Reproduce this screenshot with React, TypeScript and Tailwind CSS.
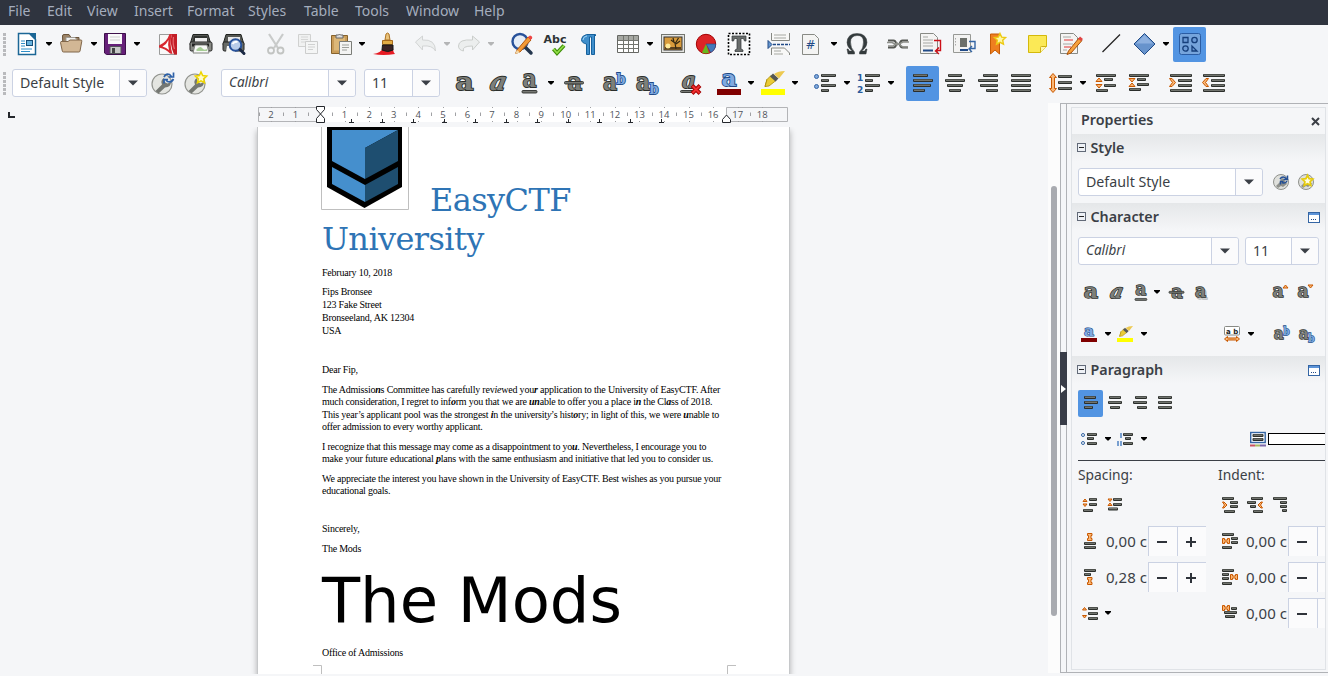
import React from "react";

type Kids = { children?: React.ReactNode };

function Slot({ w, children }: Kids & { w: string }) {
  return <div className={`flex shrink-0 items-center ${w}`}>{children}</div>;
}

function Ico({ s = 24, children }: Kids & { s?: number }) {
  return (
    <svg width={s} height={s} viewBox={`0 0 ${s} ${s}`} className="shrink-0 overflow-visible" fill="none">
      {children}
    </svg>
  );
}

function Arr({ dim = false }: { dim?: boolean }) {
  return (
    <svg width="6" height="4" viewBox="0 0 6 4" className="shrink-0">
      <path d="M0 0h6v1L3.6 3.6H2.4L0 1z" fill={dim ? "#b4b5b6" : "#000"} />
    </svg>
  );
}

function Bars({ b, h = 3 }: { b: number[][]; h?: number }) {
  return (
    <g>
      {b.map(([x, y, w], i) => (
        <g key={i}>
          <rect x={x} y={y} width={w} height={h} rx="1" fill="#2b2e2b" />
          <rect x={x + 1} y={y + 0.6} width={w - 2} height="1.2" fill="#83857f" />
        </g>
      ))}
    </g>
  );
}

function A({ x = 1, y = 19, size = 25, italic = false, blue = false, ch = "a", len, sw = 1.8 }: { x?: number; y?: number; size?: number; italic?: boolean; blue?: boolean; ch?: string; len?: number; sw?: number }) {
  return (
    <text
      x={x}
      y={y}
      fontFamily="DejaVu Serif"
      fontWeight="bold"
      fontSize={size}
      fontStyle={italic ? "italic" : "normal"}
      textLength={len}
      lengthAdjust="spacingAndGlyphs"
      fill={blue ? "#7fa9e0" : "#7d7f7a"}
      stroke={blue ? "#204a87" : "#2b2e2b"}
      strokeWidth={sw}
      style={{ paintOrder: "stroke" }}
    >
      {ch}
    </text>
  );
}

const Doc = () => <path d="M3.500 2.500h12l4 4v16h-16z" fill="#f4f4f3" stroke="#888a85" />;

const New = () => (
  <Ico>
    <path d="M3.500 1.500h11l6 6V22.500h-17z" fill="#fff" stroke="#1c6796" strokeWidth="1.500" />
    <path d="M14 1h7v7z" fill="#1c6796" />
    <path d="M6 9h4M6 11.500h4M6 14h4M6 17h11M6 19.500h9" stroke="#2f8fc9" strokeWidth="1.200" />
    <rect x="11.500" y="8.500" width="6" height="5" fill="#67b2dd" stroke="#174f78" />
  </Ico>
);
const Open = () => (
  <Ico>
    <path d="M3.500 4q0-1.500 1.500-1.500h5l2 3h8v12h-16z" fill="#9c8468" stroke="#6b543b" />
    <path d="M7 5.500h9l2 2v8H7z" fill="#f3f3f1" stroke="#a09c95" />
    <path d="M2 9.500h7l2-1.500h11q1 0 .8 1.200L21 19q-.2 1-1.200 1H4.500q-1 0-1.200-1L1.500 10.500z" fill="#d2b795" stroke="#80664a" />
  </Ico>
);
const Save = () => (
  <Ico>
    <path d="M1.500 1.500h21v21H3.500L1.500 21z" fill="#662079" stroke="#3e104b" />
    <path d="M5 2h14v10H5z" fill="#fafafa" />
    <path d="M7 5h10M7 8h10" stroke="#d0d0d0" />
    <path d="M7 14.500h11v7H7z" fill="#c7c8c7" stroke="#53525a" />
    <path d="M9 16h3v5H9z" fill="#434344" />
  </Ico>
);
const Pdf = () => (
  <Ico>
    <path d="M3.500 2.500h17v20h-17z" fill="#f8f8f8" stroke="#9b9c9b" />
    <path d="M13.500 2h2.500Q13 12 16.500 22L14 21.500Q10 17 3 15.500v-2Q11 10 13.500 2z" fill="#d82830" />
    <path d="M12.500 8q-2 4.500-6 6.500 4 1 6.500 3.500Q11.500 13 12.500 8z" fill="#fff" />
    <path d="M16 2h5v20.500h-3Q13 11 16 2z" fill="#c31d27" />
    <path d="M17.500 5q-1 7 1 12" stroke="#e8686f" strokeWidth="1.200" />
  </Ico>
);
const Print = () => (
  <Ico>
    <path d="M4 2.500h15l3 10H1z" fill="#555753" stroke="#202320" />
    <path d="M5 4h13l1 5H4z" fill="#303330" />
    <path d="M6 6h12v4H6z" fill="#eee" />
    <rect x="1" y="10" width="22" height="9" rx="1.500" fill="#888a85" stroke="#222" />
    <path d="M3 13h17" stroke="#222" strokeWidth="3" />
    <path d="M6 13h12l2 8H4z" fill="#f7f8f6" stroke="#81837e" />
    <path d="M7 18q4-5 6-2t5 1v2H8z" fill="#a6cd95" />
  </Ico>
);
const Preview = () => (
  <Ico>
    <path d="M4 2.500h15l3 10H1z" fill="#555753" stroke="#202320" />
    <path d="M6 5h12v5H6z" fill="#e8e8e8" />
    <rect x="1" y="10" width="21" height="9" rx="1.500" fill="#686b67" stroke="#222" />
    <path d="M5 14h8v6H4z" fill="#f7f8f6" />
    <circle cx="13.500" cy="13" r="5.800" fill="#b9cce9" stroke="#28529b" strokeWidth="2" />
    <path d="M10.500 12q2-3 5-2" stroke="#fff" strokeWidth="2" />
    <path d="M18 17.500l4 4" stroke="#1c2944" strokeWidth="3" strokeLinecap="round" />
  </Ico>
);
const Cut = () => (
  <Ico>
    <path d="M5 2l9 14M19 2l-9 14" stroke="#c9cbca" strokeWidth="2.200" />
    <circle cx="7" cy="18.500" r="3" stroke="#c2c4c2" strokeWidth="1.800" />
    <circle cx="16.500" cy="18.500" r="3" stroke="#c2c4c2" strokeWidth="1.800" />
  </Ico>
);
const Copy = () => (
  <Ico>
    <path d="M2.500 2.500h12v12h-12z" fill="#f0f1f1" stroke="#d0d1d0" />
    <path d="M5 5h7M5 7.500h7M5 10h5" stroke="#d5d6d6" />
    <path d="M9.500 9.500h12v12h-12z" fill="#f4f5f5" stroke="#cccdcd" />
    <path d="M12 12.500h7M12 15h7M12 17.500h5" stroke="#d0d1d1" />
  </Ico>
);
const Paste = () => (
  <Ico>
    <path d="M2.500 3.500h16v18h-16z" fill="#c99c58" stroke="#87622b" />
    <path d="M5 5.500h11v13H5z" fill="#dcb777" />
    <path d="M7 6V3h2.500q1-2 2-0H14v3z" fill="#ddd" stroke="#666" />
    <path d="M10.500 9.500h12v13h-12z" fill="#f4f4f3" stroke="#7b7d78" />
    <path d="M13 13h7M13 15.500h7M13 18h5" stroke="#9ea09b" />
  </Ico>
);
const Brush = () => (
  <Ico>
    <path d="M0 22q8-1 10-6h10q0 4 2 6-12 2-22 0z" fill="#e61a23" />
    <path d="M12 8l1-6q1.500-2 3 0l1 6z" fill="#eac37b" stroke="#ac7324" />
    <path d="M9.500 8.500h10v4h-10z" fill="#e3ad45" stroke="#a7691c" />
    <path d="M9.500 13h10.500v5q-5 3-11 0z" fill="#3a2325" stroke="#151919" />
  </Ico>
);
const Undo = () => (
  <Ico>
    <path d="M1.500 10l7-6v4q13-1 13 11-3-6-13-5v4z" fill="#eceeee" stroke="#d2d4d4" />
  </Ico>
);
const Redo = () => (
  <Ico>
    <path d="M22.500 10l-7-6v4q-14-1-14 6 0 4 5 5-2-5 9-5v4z" fill="#eceeee" stroke="#cbcecc" />
  </Ico>
);
const Find = () => (
  <Ico>
    <circle cx="10" cy="9.500" r="7.500" fill="#e5edf7" stroke="#27519a" strokeWidth="2.400" />
    <path d="M15 15l6 6" stroke="#24364e" strokeWidth="3.500" strokeLinecap="round" />
    <path d="M7 18L18 5l3 3L10 20l-4.500 1.500z" fill="#f39a37" stroke="#b45a10" />
    <path d="M18 5l2-1.500q3 1 2 3L20.500 8z" fill="#ee4545" />
    <path d="M7 18l3 2.500-5 1.500z" fill="#f0d8aa" />
  </Ico>
);
const Spell = () => (
  <Ico>
    <text x="0.500" y="10.500" fontFamily="DejaVu Sans" fontWeight="bold" fontSize="11" textLength="23" lengthAdjust="spacingAndGlyphs" fill="#2e3436">Abc</text>
    <path d="M10.500 17l3.500 4L21 13.500" stroke="#3f8f08" strokeWidth="4" />
    <path d="M10.500 17l3.500 4L21 13.500" stroke="#94e04a" strokeWidth="1.700" />
  </Ico>
);
const Pilcrow = () => (
  <Ico>
    <path d="M17.500 3v19.500h-3V5h-2v17.500h-3V12Q4.500 11 4.500 7.500T9.500 2.500h9V4z" fill="#3f8ecb" stroke="#16619d" />
    <path d="M10 4q-4 .5-4 4" stroke="#a0d4f5" />
  </Ico>
);
const TableI = () => (
  <Ico>
    <path d="M1.500 3.500h21v17h-21z" fill="#fff" stroke="#666864" />
    <path d="M2 4h20v4.500H2z" fill="#a6a8a3" />
    <path d="M2 8.500h20M2 12.500h20M2 16.500h20M7.500 4v16M12.500 4v16M17.500 4v16" stroke="#73756f" />
  </Ico>
);
const Picture = () => (
  <Ico>
    <rect x="0.500" y="2.500" width="23" height="18" fill="#e5e5e2" stroke="#73756f" />
    <rect x="3" y="5" width="18" height="13" fill="#d89b3c" stroke="#333" />
    <path d="M4 15h16v2.500H4z" fill="#59401e" />
    <circle cx="7" cy="14" r="2.500" fill="#ffea9a" />
    <path d="M15 17l-1-6-4-3M14.500 11l3-5M15 12l4-3M13 10l-1-4" stroke="#332812" strokeWidth="1.200" />
  </Ico>
);
const Chart = () => (
  <Ico>
    <circle cx="12" cy="12" r="9.700" fill="#dc2427" stroke="#a40000" />
    <path d="M12 12h9.700q0 6-5 8.500z" fill="#4479ba" stroke="#204a87" strokeWidth=".6" />
    <path d="M12 12l3 9q-4 1-7-.5z" fill="#67b81e" />
  </Ico>
);
const TextBox = () => (
  <Ico>
    <rect x="1.500" y="1.500" width="21" height="21" fill="#fafbfb" stroke="#000" strokeWidth="1.600" strokeDasharray="2 1.500" />
    <path d="M5 4h14v5h-1.500l-1-2.500H14V17l2 1v1.500H8V18l2-1V6.500H7.500L6.500 9H5z" fill="#6a6e6c" stroke="#2e3436" strokeWidth=".7" />
  </Ico>
);
const PageBreak = () => (
  <Ico>
    <path d="M4.500 1v7.500h18V1M4.500 23v-7h13l5 5v2" fill="#f8f8f7" stroke="#858782" />
    <path d="M7 3h12M7 6h12M7 19h7M7 22h9" stroke="#a5a7a2" />
    <path d="M1 8.500l4 4-4 4z" fill="#6698d1" stroke="#204a87" />
    <path d="M6 12.500h17" stroke="#204a87" strokeWidth="1.700" strokeDasharray="3 1" />
  </Ico>
);
const Field = () => (
  <Ico>
    <Doc />
    <text x="6.500" y="17" fontFamily="DejaVu Sans" fontSize="12" fill="#204a87">#</text>
  </Ico>
);
const Omega = () => (
  <Ico>
    <path d="M2 17l1 5h6.500v-2Q5.500 16 5.500 10T12 3.500 18.500 10 14.500 20v2H21l1-5h-1.200l-1 2h-3Q22 15 22 10.500 21.500 1.500 12 1.500T2 10.500Q2 15 7.200 19h-3l-1-2z" fill="#343b3d" stroke="#343b3d" strokeWidth=".5" />
  </Ico>
);
const Link = () => (
  <Ico>
    <path d="M2 8.500h5.500q2 0 3 3.500-1 3.500-3 3.500H2M22 8.500h-5.500q-2 0-3 3.500 1 3.500 3 3.500H22" stroke="#555753" strokeWidth="2" />
    <path d="M1 10.500h5l5 2.500 6-3h6M2 14h5l4-3 6 4h5" stroke="#8e908b" strokeWidth="1.500" />
  </Ico>
);
const Foot = () => (
  <Ico>
    <path d="M1.500 1.500h13l4 4v16h-17z" fill="#f4f4f3" stroke="#888a85" />
    <path d="M4 5h5M4 8h10M4 11h10M4 14h10" stroke="#a5a7a3" />
    <path d="M4 18.500h10" stroke="#204a87" strokeWidth="2" />
    <path d="M15 8.500h6.500v10h-4M20 15.500L16.500 19l3.500 3" stroke="#cc1018" strokeWidth="1.400" />
  </Ico>
);
const End = () => (
  <Ico>
    <path d="M1.500 2.500h17v18h-17z" fill="#f3f3f2" stroke="#979995" />
    <path d="M8 6h7v9H8z" fill="#6c6f6a" />
    <path d="M3.500 6v9" stroke="#aaa" strokeDasharray="1.500 1.500" />
    <path d="M8 18h8" stroke="#204a87" strokeWidth="2" />
    <path d="M17 9.500h6v7h-5M20 14l-3 3 3 3" stroke="#3465a4" strokeWidth="1.400" />
  </Ico>
);
const star = "M0-5.500l1.700 3.600 3.900.5-2.900 2.700.8 3.900L0 3.300l-3.500 1.900.8-3.900-2.900-2.700 3.900-.5z";
const Bookmark = () => (
  <Ico>
    <path d="M5.500 2h9v20L10 18l-4.500 4z" fill="#ee7f20" stroke="#c65b05" />
    <path d={star} transform="translate(15 7)" fill="#fff6a4" stroke="#ecca12" strokeWidth="1.400" />
  </Ico>
);
const Note = () => (
  <Ico>
    <path d="M2.500 3.500h18v11l-6 6h-12z" fill="#fbe956" stroke="#d4b90b" />
    <path d="M20.500 14.500h-5q-1 0-1 1v5" fill="#fff8b2" stroke="#ceb014" />
  </Ico>
);
const Track = () => (
  <Ico>
    <path d="M1.500 1.500h13l4 4v16h-17z" fill="#f4f4f3" stroke="#888a85" />
    <path d="M4 5h8M4 12h10M4 18h4" stroke="#a6a8a4" />
    <path d="M5 8h9M5 15h7" stroke="#e03535" />
    <path d="M9.500 19L20 6l3 2.500L12 21l-4 1.500z" fill="#f6a13c" stroke="#a9520b" />
    <path d="M19 7l2-2.500 3 2.500-2 2z" fill="#e14444" />
  </Ico>
);
const LineI = () => (
  <Ico>
    <path d="M3.500 20L21 2.500" stroke="#222" strokeWidth="1.300" />
  </Ico>
);
const Diamond = () => (
  <Ico>
    <path d="M12.500 1.500L23 12 12.500 22.500 2 12z" fill="#6793cc" stroke="#204a87" />
    <path d="M12.500 3L21 11.500H4z" fill="#8db0df" />
  </Ico>
);
const Shapes = () => (
  <Ico>
    <rect x="1.500" y="1.500" width="21" height="21" rx="2" fill="#76a4db" stroke="#2a5ca3" />
    <g fill="#6b9ad6" stroke="#163f7b" strokeWidth="1.300">
      <path d="M5 5.500h5v5H5z" />
      <circle cx="16.500" cy="8" r="2.700" />
      <circle cx="7.500" cy="16.500" r="2.700" />
      <path d="M14 14v5h5z" />
    </g>
  </Ico>
);

function Wrench({ isNew = false }: { isNew?: boolean }) {
  return (
    <Ico>
      <circle cx="11" cy="13" r="10" fill="#e4e5e1" stroke="#92948f" strokeWidth="1.200" />
      <path d="M4.500 20L11 13.500q-2-4 2-6.500l.5 4 3 1.500 3.500-1.500q0 5-6 5.500l-6.500 6z" fill="#747772" />
      {isNew ? (
        <path d={star} transform="translate(17 6.500)" fill="#fffbc8" stroke="#edd400" strokeWidth="1.600" />
      ) : (
        <path d="M13 6q2-4 5.500-2.500l2 2M22.500 1.500V6h-5M22.500 8q-2 4-6 2.500l-2-2M13 12.500V8.500h4" stroke="#2d60a8" strokeWidth="1.700" />
      )}
    </Ico>
  );
}

function SmallWrench({ isNew = false }: { isNew?: boolean }) {
  return (
    <Ico s={16}>
      <circle cx="8" cy="8" r="7.500" fill="#dfe0dc" stroke="#8f918c" />
      <path d="M3 12l4-4q0-3 3-4l4 6-4 3-2-1-3 2z" fill="#8e908b" />
      {isNew ? (
        <path d={star} transform="translate(9.500 6.500) scale(.95)" fill="#fffde0" stroke="#e6cb0c" strokeWidth="1.800" />
      ) : (
        <path d="M7 5q2-3 5-1.500l1.500 1.500M14.500 1.500V5.500h-4M14 7q-1.500 3-5 1.500M7.500 10.500v-3h3" stroke="#244f94" strokeWidth="1.500" />
      )}
    </Ico>
  );
}

const FontColor = ({ s = 24 }: { s?: number }) => (
  <svg width={s} height={s} viewBox="0 0 24 24" className="shrink-0 overflow-visible">
    <A x={4.5} y={14.5} size={23} len={15} blue />
    <rect x="0" y="18" width="24" height="6" fill="#800000" />
  </svg>
);
const Highlight = ({ s = 24 }: { s?: number }) => (
  <svg width={s} height={s} viewBox="0 0 24 24" className="shrink-0 overflow-visible">
    <path d="M4 15.500l2-7 3 4z" fill="#f4d940" stroke="#a98b08" />
    <path d="M6 8.500l4-4 5 5-7 5.500-4 .5z" fill="#eacb37" stroke="#a98b08" strokeWidth=".8" />
    <path d="M9 5.500l3-3 5.500 5-3 3z" fill="#555753" />
    <path d="M13 3q4-3 11-3l-6 7.500z" fill="#edc951" />
    <rect x="0" y="18" width="24" height="6" fill="#ff0" />
  </svg>
);
const Sup = ({ s = 24 }: { s?: number }) => (
  <svg width={s} height={s} viewBox="0 0 24 24" className="shrink-0 overflow-visible">
    <A x={1} y={18.5} size={24} len={14} />
    <A x={14.5} y={12.5} size={15} len={9} blue ch="b" />
  </svg>
);
const Sub = ({ s = 24 }: { s?: number }) => (
  <svg width={s} height={s} viewBox="0 0 24 24" className="shrink-0 overflow-visible">
    <A x={1} y={18.5} size={24} len={14} />
    <A x={14.5} y={22.5} size={15} len={9} blue ch="b" />
  </svg>
);
const Under = ({ s = 24 }: { s?: number }) => (
  <svg width={s} height={s} viewBox="0 0 24 24" className="shrink-0 overflow-visible">
    <A x={5.5} y={15.5} size={24} len={14} />
    <rect x="5" y="19.500" width="15" height="2.500" rx="1" fill="#777974" stroke="#2b2e2b" strokeWidth=".9" />
  </svg>
);
const Strike = ({ s = 24 }: { s?: number }) => (
  <svg width={s} height={s} viewBox="0 0 24 24" className="shrink-0 overflow-visible">
    <A x={5.5} y={18.5} size={24} len={14.5} />
    <rect x="2.500" y="10.500" width="19" height="2.500" rx="1" fill="#777974" stroke="#2b2e2b" strokeWidth=".9" />
  </svg>
);
const Bold = ({ s = 24 }: { s?: number }) => (
  <svg width={s} height={s} viewBox="0 0 24 24" className="shrink-0 overflow-visible">
    <A x={3.5} y={18.5} size={25} len={18} />
  </svg>
);
const Italic = ({ s = 24 }: { s?: number }) => (
  <svg width={s} height={s} viewBox="0 0 24 24" className="shrink-0 overflow-visible">
    <g transform="translate(5 0) skewX(-12)">
      <A x={3} y={18.5} size={25} len={16} italic />
    </g>
  </svg>
);
const Clear = () => (
  <Ico>
    <A x={3} y={16.5} size={23} len={14} italic />
    <rect x="1.500" y="19.500" width="13" height="2" rx="1" fill="#777974" stroke="#2b2e2b" strokeWidth=".9" />
    <path d="M13 14.500l8 8M21 14.500l-8 8" stroke="#a40000" strokeWidth="4" />
    <path d="M13.500 15l7 7M20.500 15l-7 7" stroke="#f03030" strokeWidth="2" />
  </Ico>
);

function Combo({ w, label, italic = false }: { w: string; label: string; italic?: boolean }) {
  return (
    <div className={`flex h-7 shrink-0 rounded-[3px] border border-[#cbd2e3] bg-white ${w}`}>
      <div className={`flex-1 pl-[7px] leading-[25px] whitespace-nowrap ${italic ? "text-[13.500px] italic" : "text-[14.200px]"}`}>{label}</div>
      <div className="flex w-[27px] items-center justify-center rounded-r-[3px] border-l border-[#cbd2e3] bg-[#fbfbfc]">
        <svg width="10" height="6" viewBox="0 0 10 6">
          <path d="M0 .5h10L5 5.500z" fill="#3b3f46" />
        </svg>
      </div>
    </div>
  );
}

const Grip = () => (
  <svg width="4" height="23" className="shrink-0">
    {[0, 4, 8, 12, 16, 20].map((y) => (
      <rect key={y} x="0" y={y} width="3" height="3" fill="#b9babd" />
    ))}
  </svg>
);

function Ruler() {
  const u = 24.57;
  const nums = [-2, -1, 1, 2, 3, 4, 5, 6, 7, 8, 9, 10, 11, 12, 13, 14, 15, 16, 17, 18];
  const halves = Array.from({ length: 21 }, (_, i) => i - 2.5).filter((n) => n !== 16.5);
  const tabs = Array.from({ length: 11 }, (_, i) => i);
  return (
    <svg width="534" height="22" viewBox="256 104 534 22" className="block" fill="none">
      <rect x="320" y="107" width="407" height="15" fill="#fff" />
      <path d="M320 107.500h-61.500v14H320M727 121.500h60.500v-14H726.500v14" stroke="#b3b4b7" />
      {halves.map((n) => (
        <path key={n} d={`M${Math.round(320 + n * u)}.5 112.500v3.500`} stroke="#a0a1a4" />
      ))}
      {nums.map((n) => (
        <g key={n}>
          <text x={320 + n * u} y="118" textAnchor="middle" fontFamily="Open Sans" fontSize="9.500" fill="#4f535a">
            {Math.abs(n)}
          </text>
          <path d={`M${Math.round(320 + n * u)}.5 107v1M${Math.round(320 + n * u)}.5 121v1`} stroke="#a0a1a4" />
        </g>
      ))}
      {tabs.map((i) => (
        <path key={i} d={`M${Math.round(351 + i * 30.95)}.5 119v3M${Math.round(351 + i * 30.95) - 2} 122.500h5`} stroke="#24272c" />
      ))}
      <path d="M316.500 106.500h8v3l-4 4.500 4 4.500v4h-8v-4l4-4.500-4-4.500z" fill="#fff" stroke="#24272c" />
      <path d="M722.500 122.500v-3l4-4.500 4 4.500v3z" fill="#fff" stroke="#24272c" />
    </svg>
  );
}

function L({ w, children }: Kids & { w: string }) {
  return <div className={`h-[12.300px] leading-[12.300px] whitespace-nowrap text-justify [text-align-last:justify] ${w}`}>{children}</div>;
}
const B = ({ children }: Kids) => <b className="font-bold italic">{children}</b>;

function Head({ label, dlg = false }: { label: string; dlg?: boolean }) {
  return (
    <div className="flex h-[27px] items-center bg-linear-to-b from-[#e5e7e9] to-[#f5f6f8] pl-[5px]">
      <svg width="9" height="9" fill="none">
        <rect x=".5" y=".5" width="8" height="8" fill="#eef1f6" stroke="#626a78" />
        <path d="M2 4.500h5" stroke="#222" />
      </svg>
      <span className="ml-[4.500px] flex-1 text-[14.300px] font-semibold text-[#3b3f46]">{label}</span>
      {dlg && (
        <svg width="12" height="11" className="mt-[2px] mr-[5px]" fill="none">
          <rect x=".5" y=".5" width="11" height="10" fill="#fff" stroke="#3465a4" />
          <path d="M1 2h10" stroke="#5d94d8" strokeWidth="2" />
          <path d="M3 7.500h6" stroke="#204a87" strokeDasharray="1 1" />
        </svg>
      )}
    </div>
  );
}

const or = { fill: "#fab877", stroke: "#c95800" };

function Spin({ w, partial = false }: { w: string; partial?: boolean }) {
  return (
    <div className={`flex h-[30px] shrink-0 ${w}`}>
      <div className="flex w-[29px] shrink-0 items-center justify-center border-t border-l border-[#cbd2e3] bg-[#fbfbfc] pr-[2px]">
        <div className="h-[2px] w-[10px] bg-[#2f333a]" />
      </div>
      <div className="flex flex-1 items-center justify-center border-t border-l border-[#cbd2e3] bg-[#fbfbfc] pr-[2px]">
        {!partial && (
          <svg width="10" height="10">
            <path d="M0 5h10M5 0v10" stroke="#2f333a" strokeWidth="2" />
          </svg>
        )}
      </div>
    </div>
  );
}

const Amount = ({ v }: { v: string }) => <span className="w-[42px] overflow-hidden text-[15px] leading-[20px] whitespace-nowrap">{v}</span>;

const hI = (x: number, y: number) => <path d={`M${x} ${y}v5h2v-1.500h3V${y + 5}h2V${y}h-2v1.500h-3V${y}z`} {...or} />;
const vI = (x: number, y: number) => <path d={`M${x} ${y}h4.500v2h-1v3h1v2H${x}v-2h1v-3h-1z`} {...or} />;

export default function App() {
  return (
    <div className="flex h-[676px] w-[1328px] flex-col overflow-hidden bg-[#f5f6f8] font-['Noto_Sans',sans-serif] text-[#3b3f46]">
      <div className="flex h-[25px] shrink-0 bg-[#2f343f] pb-[4px] pl-2 text-[14px] leading-[21px] text-[#a4adbd]">
        <Slot w="w-[39px]">File</Slot>
        <Slot w="w-[40px]">Edit</Slot>
        <Slot w="w-[47px]">View</Slot>
        <Slot w="w-[53px]">Insert</Slot>
        <Slot w="w-[61px]">Format</Slot>
        <Slot w="w-[56px]">Styles</Slot>
        <Slot w="w-[51px]">Table</Slot>
        <Slot w="w-[51px]">Tools</Slot>
        <Slot w="w-[68px]">Window</Slot>
        <Slot w="w-[40px]">Help</Slot>
      </div>

      <div className="flex h-[39px] shrink-0 items-center pb-px pl-[3px]">
        <Slot w="w-[12px]"><Grip /></Slot>
        <Slot w="w-[31px]"><New /></Slot>
        <Slot w="w-[13px]"><Arr /></Slot>
        <Slot w="w-[32px]"><Open /></Slot>
        <Slot w="w-[12px]"><Arr /></Slot>
        <Slot w="w-[31px]"><Save /></Slot>
        <Slot w="w-[22px]"><Arr /></Slot>
        <Slot w="w-[33px]"><Pdf /></Slot>
        <Slot w="w-[33px]"><Print /></Slot>
        <Slot w="w-[42px]"><Preview /></Slot>
        <Slot w="w-[32px]"><Cut /></Slot>
        <Slot w="w-[33px]"><Copy /></Slot>
        <Slot w="w-[30px]"><Paste /></Slot>
        <Slot w="w-[14px]"><Arr /></Slot>
        <Slot w="w-[41px]"><Brush /></Slot>
        <Slot w="w-[30px]"><Undo /></Slot>
        <Slot w="w-[13px]"><Arr dim /></Slot>
        <Slot w="w-[31px]"><Redo /></Slot>
        <Slot w="w-[22px]"><Arr dim /></Slot>
        <Slot w="w-[33px]"><Find /></Slot>
        <Slot w="w-[34px]"><Spell /></Slot>
        <Slot w="w-[39px]"><Pilcrow /></Slot>
        <Slot w="w-[31px]"><TableI /></Slot>
        <Slot w="w-[14px]"><Arr /></Slot>
        <Slot w="w-[33px]"><Picture /></Slot>
        <Slot w="w-[33px]"><Chart /></Slot>
        <Slot w="w-[40px]"><TextBox /></Slot>
        <Slot w="w-[32px]"><PageBreak /></Slot>
        <Slot w="w-[32px]"><Field /></Slot>
        <Slot w="w-[14px]"><Arr /></Slot>
        <Slot w="w-[41px]"><Omega /></Slot>
        <Slot w="w-[33px]"><Link /></Slot>
        <Slot w="w-[33px]"><Foot /></Slot>
        <Slot w="w-[33px]"><End /></Slot>
        <Slot w="w-[41px]"><Bookmark /></Slot>
        <Slot w="w-[33px]"><Note /></Slot>
        <Slot w="w-[40px]"><Track /></Slot>
        <Slot w="w-[33px]"><LineI /></Slot>
        <Slot w="w-[31px]"><Diamond /></Slot>
        <Slot w="w-[10px]"><Arr /></Slot>
        <div className="flex h-[35px] w-[33px] shrink-0 items-center justify-center rounded-[2px] bg-[#5294e2]"><Shapes /></div>
      </div>

      <div className="flex h-[39px] shrink-0 items-center pb-px pl-[3px]">
        <Slot w="w-[9px]"><Grip /></Slot>
        <Slot w="w-[139px]"><Combo w="w-[135px]" label="Default Style" /></Slot>
        <Slot w="w-[33px]"><Wrench /></Slot>
        <Slot w="w-[37px]"><Wrench isNew /></Slot>
        <Slot w="w-[143px]"><Combo w="w-[135px]" label="Calibri" italic /></Slot>
        <Slot w="w-[88px]"><Combo w="w-[76px]" label="11" /></Slot>
        <Slot w="w-[33px]"><Bold /></Slot>
        <Slot w="w-[32px]"><Italic /></Slot>
        <Slot w="w-[31px]"><Under /></Slot>
        <Slot w="w-[14px]"><Arr /></Slot>
        <Slot w="w-[40px]"><Strike /></Slot>
        <Slot w="w-[33px]"><Sup /></Slot>
        <Slot w="w-[44px]"><Sub /></Slot>
        <Slot w="w-[38px]"><Clear /></Slot>
        <Slot w="w-[31px]"><FontColor /></Slot>
        <Slot w="w-[13px]"><Arr /></Slot>
        <Slot w="w-[31px]"><Highlight /></Slot>
        <Slot w="w-[21px]"><Arr /></Slot>
        <Slot w="w-[31px]">
          <Ico>
            <g fill="#7fa7dc" stroke="#3465a4"><circle cx="3.500" cy="5.500" r="2" /><circle cx="3.500" cy="15.500" r="2" /></g>
            <Bars b={[[8, 3, 15], [8, 8, 8], [8, 13, 15], [8, 18, 8]]} />
          </Ico>
        </Slot>
        <Slot w="w-[13px]"><Arr /></Slot>
        <Slot w="w-[31px]">
          <Ico>
            <text x="0" y="9.500" fontFamily="DejaVu Sans" fontWeight="bold" fontSize="9" fill="#2a5b9c">1</text>
            <text x="0" y="21.500" fontFamily="DejaVu Sans" fontWeight="bold" fontSize="9" fill="#2a5b9c">2</text>
            <Bars b={[[8, 3, 15], [8, 8, 8], [8, 13, 15], [8, 18, 8]]} />
          </Ico>
        </Slot>
        <Slot w="w-[18px]"><Arr /></Slot>
        <div className="flex h-[35px] w-[33px] shrink-0 items-center justify-center rounded-[2px] bg-[#5294e2]">
          <Ico><Bars b={[[2, 3, 15], [2, 8, 20], [2, 13, 18], [2, 18, 12]]} /></Ico>
        </div>
        <Slot w="w-[4px]" />
        <Slot w="w-[33px]"><Ico><Bars b={[[5, 3, 14], [2, 8, 20], [4, 13, 16], [6, 18, 12]]} /></Ico></Slot>
        <Slot w="w-[33px]"><Ico><Bars b={[[7, 3, 15], [2, 8, 20], [4, 13, 18], [10, 18, 12]]} /></Ico></Slot>
        <Slot w="w-[39px]"><Ico><Bars b={[[2, 3, 20], [2, 8, 20], [2, 13, 20], [2, 18, 20]]} /></Ico></Slot>
        <Slot w="w-[32px]">
          <Ico>
            <path d="M5 2.500l3.500 4H6.500v11h2L5 21.500l-3.500-4h2v-11h-2z" {...or} />
            <Bars b={[[10, 4, 14], [10, 10, 14], [10, 16, 14]]} />
          </Ico>
        </Slot>
        <Slot w="w-[14px]"><Arr /></Slot>
        <Slot w="w-[33px]">
          <Ico>
            <Bars b={[[2, 3, 20], [10, 7, 9], [10, 13, 12], [2, 18, 12]]} />
            <path d="M5 7l3 3.500H2zM5 17l3-3.500H2z" {...or} />
          </Ico>
        </Slot>
        <Slot w="w-[41px]">
          <Ico>
            <Bars b={[[2, 3, 20], [10, 7, 9], [10, 12, 12], [2, 17, 12]]} />
            <path d="M5 11l3-3.500H2zM5 12l3 3.500H2z" {...or} />
          </Ico>
        </Slot>
        <Slot w="w-[33px]">
          <Ico>
            <Bars b={[[2, 3, 22], [10, 8, 14], [10, 13, 14], [2, 18, 22]]} />
            <path d="M1.500 7.500h2.500l3.500 4-3.500 4H1.500l3-4z" {...or} />
          </Ico>
        </Slot>
        <Slot w="w-[24px]">
          <Ico>
            <Bars b={[[2, 3, 22], [10, 8, 14], [10, 13, 14], [2, 18, 22]]} />
            <path d="M7.500 7.500H5l-3.500 4 3.500 4h2.500l-3-4z" {...or} />
          </Ico>
        </Slot>
      </div>

      <div className="flex min-h-0 flex-1">
        <div className="flex h-[571px] w-[1048px] flex-col overflow-hidden">
          <div className="flex h-[24px] shrink-0 pt-px">
            <svg width="256" height="22"><path d="M9 8v5h6" stroke="#24272c" strokeWidth="2" fill="none" /></svg>
            <Ruler />
          </div>
          <div className="ml-[257px] h-[547px] w-[533px] shrink-0 border-x border-[#c6c8ca] bg-white pl-[63px] text-black shadow-[0_4px_6px_rgba(0,0,0,0.3)] [clip-path:inset(0_-8px_0_-8px)]">
            <div className="flex h-[83px] items-end">
              <svg width="89" height="83" viewBox="0 0 89 83" fill="none" className="shrink-0">
                <path d="M.5 0v82.500h87V0" stroke="#bfbfbf" />
                <path d="M6 0h75v60L43.500 81 6 60z" fill="#000" />
                <path d="M11 3h33v49L11 34z" fill="#458fcd" />
                <path d="M11 3h66L44 21H11z" fill="#458fcd" />
                <path d="M77 3v31L44 52V21z" fill="#1e4e70" />
                <path d="M11 40l33 18v17L11 57z" fill="#458fcd" />
                <path d="M77 40L44 58v17l33-18z" fill="#1e4e70" />
              </svg>
            </div>
            <div className="-mt-[30px] h-[39px] pl-[109px] font-['DejaVu_Serif',serif] text-[32px] leading-[40px] tracking-[-0.600px] text-[#2e74b5]">EasyCTF</div>
            <div className="h-[41px] pl-px font-['DejaVu_Serif',serif] text-[32px] leading-[40px] tracking-[-0.600px] text-[#2e74b5]">University</div>
            <div className="pl-px font-['Liberation_Serif',serif] text-[10px] tracking-[-0.220px]">
              <div className="h-[6.500px]" />
              <L w="w-[70px]">February 10, 2018</L>
              <div className="h-[7.500px]" />
              <div className="flex flex-col gap-[0.700px]">
                <L w="w-[49px]">Fips Bronsee</L>
                <L w="w-[59px]">123 Fake Street</L>
                <L w="w-[92px]">Bronseeland, AK 12304</L>
                <L w="w-[18px]">USA</L>
              </div>
              <div className="h-[26.500px]" />
              <L w="w-[35px]">Dear Fip,</L>
              <div className="h-[7.700px]" />
              <L w="w-[398px]">The Admissio<B>n</B>s Committ<i>e</i>e has carefully rev<i>ie</i>wed you<B>r</B> application to the University of EasyCTF. After</L>
              <L w="w-[390px]">much consideration, I regret to inf<B>o</B>rm you that we are <B>un</B>able to offer you a place i<B>n</B> the Cl<B>a</B>ss of 2018.</L>
              <L w="w-[397px]">This year’s applicant pool was the strongest <B>i</B>n the uni<i>v</i>ersit<i>y</i>’s hist<B>o</B>ry; in light of this, we were <B>u</B>nable to</L>
              <L w="w-[159px]">offer admission to every worthy applicant.</L>
              <div className="h-[7.700px]" />
              <L w="w-[384px]">I recognize that this message may come as a disappointment to yo<B>u</B>. Nevertheless, I encourage you to</L>
              <L w="w-[391px]">make your future educational <B>p</B>lans with the same enthusiasm and initiative that led you to consider us.</L>
              <div className="h-[7.700px]" />
              <L w="w-[399px]">We appreciate the interest you have shown in the University of EasyCTF. Best wishes as you pursue your</L>
              <L w="w-[67px]">educational goals.</L>
              <div className="h-[25.500px]" />
              <L w="w-[36px]">Sincerely,</L>
              <div className="h-[7.700px]" />
              <L w="w-[39px]">The Mods</L>
              <div className="h-[91px] font-['DejaVu_Sans',sans-serif] text-[62.400px] leading-[89px] tracking-normal whitespace-nowrap">The Mods</div>
              <L w="w-[81px]">Office of Admissions</L>
            </div>
            <svg width="440" height="15" className="-ml-[10px]" fill="none">
              <path d="M2 6.500h8.500V16M425 6.500h-8.500V16" stroke="#bfbfbf" />
            </svg>
          </div>
        </div>

        <div className="flex h-[570px] w-[12px] shrink-0 justify-center bg-[#fcfcfc] pt-[83px]">
          <div className="h-[430px] w-[6px] rounded-[3px] bg-[#a9abb0]" />
        </div>

        <div className="relative flex h-[570px] w-[268px] shrink-0 border-y border-l border-[#b0b2b6] bg-[#f5f6f8]">
          <div className="w-[5px] shrink-0" />
          <div className="absolute top-[248px] -left-px flex h-[73px] w-[7px] items-center bg-[#383c47]">
            <svg width="6" height="8"><path d="M1 0l5 4-5 4z" fill="#fff" /></svg>
          </div>
          <div className="flex-1 border-l border-[#b0b2b6] pt-[3px] pl-[4px]">
            <div className="flex h-[563px] w-[255px] flex-col overflow-hidden border border-[#e0e3e7]">
              <div className="flex h-[26px] shrink-0 items-center justify-between pr-[5px] pl-[9px]">
                <span className="pb-[2px] text-[14.300px] font-semibold">Properties</span>
                <svg width="9" height="9"><path d="M1 1l7 7M8 1l-7 7" stroke="#3b3f46" strokeWidth="2" /></svg>
              </div>
              <Head label="Style" />
              <div className="flex h-[42px] shrink-0 items-center pl-[6px]">
                <Slot w="w-[195px]"><Combo w="w-[185px]" label="Default Style" /></Slot>
                <Slot w="w-[25px]"><SmallWrench /></Slot>
                <Slot w="w-[17px]"><SmallWrench isNew /></Slot>
              </div>
              <Head label="Character" dlg />
              <div className="flex h-[42px] shrink-0 items-center gap-[6px] pl-[6px]">
                <Combo w="w-[161px]" label="Calibri" italic />
                <Combo w="w-[74px]" label="11" />
              </div>
              <div className="flex h-[40px] shrink-0 items-center pl-[9px]">
                <Slot w="w-[25px]"><Bold s={19} /></Slot>
                <Slot w="w-[25px]"><Italic s={19} /></Slot>
                <Slot w="w-[23px]"><Under s={19} /></Slot>
                <Slot w="w-[13px]"><Arr /></Slot>
                <Slot w="w-[27px]"><Strike s={19} /></Slot>
                <Slot w="w-[78px]"><Ico s={16}><g opacity=".3" transform="translate(1.500 1.500)"><A x={1} y={13} size={18} len={11} sw={1.4} /></g><A x={1} y={13} size={18} len={11} sw={1.4} /></Ico></Slot>
                <Slot w="w-[25px]"><Ico s={16}><A x={0.5} y={13} size={18} len={11} sw={1.4} /><path d="M13.500 1l2.500 3h-5z" {...or} /></Ico></Slot>
                <Slot w="w-[16px]"><Ico s={16}><A x={0.5} y={13} size={18} len={11} sw={1.4} /><path d="M13.500 4l2.500-3h-5z" {...or} /></Ico></Slot>
              </div>
              <div className="flex h-[44px] shrink-0 items-center pl-[9px]">
                <Slot w="w-[24px]"><FontColor s={16} /></Slot>
                <Slot w="w-[12px]"><Arr /></Slot>
                <Slot w="w-[24px]"><Highlight s={16} /></Slot>
                <Slot w="w-[83px]"><Arr /></Slot>
                <Slot w="w-[24px]">
                  <Ico s={16}>
                    <rect x=".5" y=".5" width="15" height="8.500" rx="1" fill="#fff" stroke="#888a85" />
                    <text x="2" y="7.500" fontFamily="DejaVu Sans" fontWeight="bold" fontSize="7" fill="#222">a b</text>
                    <path d="M.5 13l3-2.500v1.500h9v-1.500l3 2.500-3 2.500V14h-9v1.500z" {...or} />
                  </Ico>
                </Slot>
                <Slot w="w-[25px]"><Arr /></Slot>
                <Slot w="w-[25px]"><Sup s={17} /></Slot>
                <Slot w="w-[16px]"><Sub s={17} /></Slot>
              </div>
              <Head label="Paragraph" dlg />
              <div className="flex h-[40px] shrink-0 items-center pl-[6px]">
                <div className="flex h-[27px] w-[25px] items-center justify-center rounded-[2px] bg-[#5294e2]">
                  <Ico s={16}><Bars b={[[1, 1, 12], [1, 6, 14], [1, 11, 9]]} /></Ico>
                </div>
                <Slot w="w-[4px]" />
                <Slot w="w-[25px]"><Ico s={16}><Bars b={[[2, 1, 12], [1, 6, 14], [3, 11, 10]]} /></Ico></Slot>
                <Slot w="w-[25px]"><Ico s={16}><Bars b={[[3, 1, 12], [1, 6, 14], [5, 11, 10]]} /></Ico></Slot>
                <Slot w="w-[25px]"><Ico s={16}><Bars b={[[1, 1, 14], [1, 6, 14], [1, 11, 14]]} /></Ico></Slot>
              </div>
              <div className="flex h-[32px] shrink-0 items-center pl-[9px]">
                <Slot w="w-[24px]">
                  <Ico s={16}>
                    <g stroke="#3465a4"><circle cx="2" cy="4" r="1.500" /><circle cx="2" cy="12" r="1.500" /></g>
                    <Bars b={[[6, 2, 10], [6, 6, 7], [6, 11, 10]]} />
                  </Ico>
                </Slot>
                <Slot w="w-[12px]"><Arr /></Slot>
                <Slot w="w-[24px]">
                  <Ico s={16}>
                    <path d="M4 2v5M1 10v5M4 10v5" stroke="#5a8ac6" strokeWidth="1.600" />
                    <Bars b={[[6, 2, 10], [8, 6, 6], [6, 11, 10]]} />
                  </Ico>
                </Slot>
                <Slot w="w-[109px]"><Arr /></Slot>
                <Slot w="w-[18px]">
                  <Ico s={16}>
                    <rect x=".7" y="1.500" width="14.500" height="10" fill="#fff" stroke="#3465a4" strokeWidth="1.400" />
                    <Bars b={[[2.5, 3, 11], [2.5, 7, 11]]} />
                    <path d="M0 14.500h5" stroke="#cb5263" strokeWidth="2" />
                    <path d="M5 14.500h5" stroke="#a9ba61" strokeWidth="2" />
                    <path d="M10 14.500h6" stroke="#7d68a9" strokeWidth="2" />
                  </Ico>
                </Slot>
                <div className="h-[12px] flex-1 border border-r-0 border-black bg-white" />
              </div>
              <div className="mt-[5px] ml-[6px] h-px shrink-0 bg-[#3b3f46]" />
              <div className="flex h-[30px] shrink-0 items-center pb-[2px] pl-[6px] text-[13.800px]">
                <Slot w="w-[140px]">Spacing:</Slot>
                <Slot w="w-[80px]">Indent:</Slot>
              </div>
              <div className="flex h-[28px] shrink-0 items-center pl-[10px]">
                <Slot w="w-[25px]"><Ico s={16}><path d="M3 2l2 2.500H1zM3 9.500L5 7H1z" {...or} /><Bars b={[[7, 1, 8], [7, 6, 8], [1, 12, 10]]} /></Ico></Slot>
                <Slot w="w-[115px]"><Ico s={16}><path d="M3 4.500L5 2H1zM3 6l2 2.500H1z" {...or} /><Bars b={[[6, 1, 9], [6, 6, 9], [1, 10.5, 10]]} /></Ico></Slot>
                <Slot w="w-[25px]"><Ico s={16}><path d="M.5 5H2l3 3-3 3H.5l2-3z" {...or} /><Bars b={[[0, 0, 12], [8, 4, 8], [8, 8, 8], [2, 13, 11]]} /></Ico></Slot>
                <Slot w="w-[25px]"><Ico s={16}><path d="M15.500 5H14l-3 3 3 3h1.500l-2-3z" {...or} /><Bars b={[[4, 0, 12], [0, 4, 9], [3, 8, 6], [6, 13, 10]]} /></Ico></Slot>
                <Slot w="w-[16px]"><Ico s={16}><Bars b={[[1, 0, 14], [8, 4, 7], [8, 8, 7], [10, 12, 5]]} /></Ico></Slot>
              </div>
              <div className="mt-[7px] flex flex-col gap-[6px]">
                <div className="flex h-[30px] items-center pl-[10px]">
                  <Slot w="w-[24px]"><Ico s={16}>{vI(5.5, 0.5)}<Bars b={[[2, 9, 12], [2, 13, 12]]} /></Ico></Slot>
                  <Slot w="w-[42px]"><Amount v="0,00 c" /></Slot>
                  <Spin w="w-[58px]" />
                  <Slot w="w-[16px]" />
                  <Slot w="w-[24px]"><Ico s={16}>{hI(0.5, 5.5)}<Bars b={[[0, 0, 12], [9, 4, 7], [9, 8, 7], [0, 13, 10]]} /></Ico></Slot>
                  <Slot w="w-[42px]"><Amount v="0,00 c" /></Slot>
                  <Spin w="w-[37px]" partial />
                </div>
                <div className="flex h-[30px] items-center pl-[10px]">
                  <Slot w="w-[24px]"><Ico s={16}>{vI(5.5, 8.5)}<Bars b={[[2, 0, 12], [2, 4, 7]]} /></Ico></Slot>
                  <Slot w="w-[42px]"><Amount v="0,28 c" /></Slot>
                  <Spin w="w-[58px]" />
                  <Slot w="w-[16px]" />
                  <Slot w="w-[24px]"><Ico s={16}>{hI(8.5, 5.5)}<Bars b={[[0, 0, 12], [0, 4, 7], [0, 8, 7], [0, 13, 10]]} /></Ico></Slot>
                  <Slot w="w-[42px]"><Amount v="0,00 c" /></Slot>
                  <Spin w="w-[37px]" partial />
                </div>
                <div className="flex h-[30px] items-center pl-[10px]">
                  <Slot w="w-[23px]"><Ico s={16}><path d="M2.500 2.500l2 2.500h-4zM2.500 13l2-2.500h-4z" {...or} /><Bars b={[[6, 2, 10], [6, 7, 10], [6, 12, 10]]} /></Ico></Slot>
                  <Slot w="w-[117px]"><Arr /></Slot>
                  <Slot w="w-[24px]"><Ico s={16}>{hI(0.5, 0.5)}<Bars b={[[9, 2, 6], [2, 6, 13], [3, 10, 10]]} /></Ico></Slot>
                  <Slot w="w-[42px]"><Amount v="0,00 c" /></Slot>
                  <Spin w="w-[37px]" partial />
                </div>
              </div>
            </div>
          </div>
        </div>
      </div>
    </div>
  );
}
